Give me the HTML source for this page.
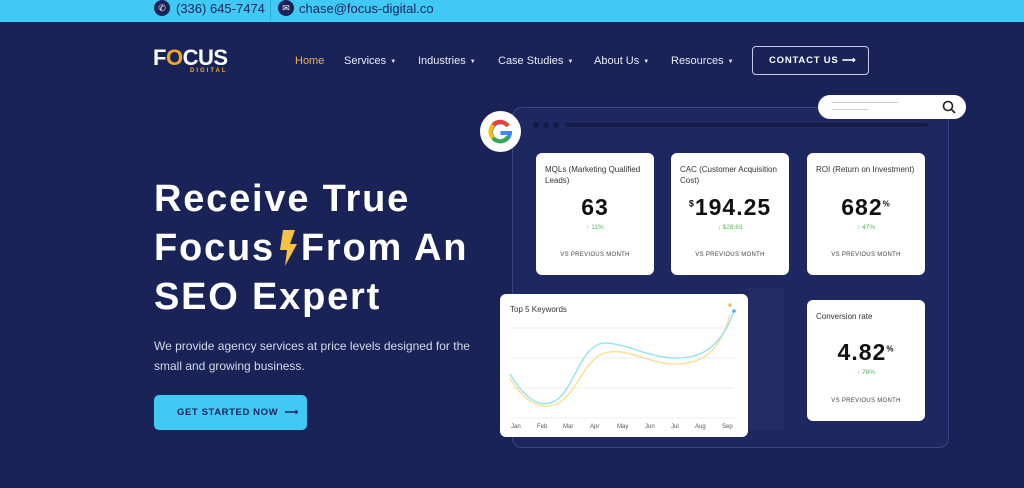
<!DOCTYPE html>
<html><head><style>
*{margin:0;padding:0;box-sizing:border-box}
body{width:1024px;height:488px;overflow:hidden;background:#1a2358;font-family:"Liberation Sans",sans-serif;position:relative;color:#fff}
.top{position:absolute;left:0;top:0;width:1024px;height:22px;background:#41c9f5}
.ic{position:absolute;top:0;width:16px;height:16px;border-radius:50%;background:#1a2358;color:#fff;font-size:9px;text-align:center;line-height:16px}
.tt{position:absolute;top:1px;font-size:13px;color:#1a2358}
.nav{position:absolute;top:55px;font-size:11px;color:#e8eaf3}
.nav span{font-size:6px;margin-left:4px;vertical-align:1px}
.card{position:absolute;background:#fff;border-radius:6px;color:#222}
.lbl{position:absolute;left:9px;top:11px;font-size:8px;line-height:11px;color:#333}
.big{position:absolute;width:100%;text-align:center;font-weight:bold;font-size:23px;color:#111;letter-spacing:1px}
.ch{position:absolute;width:100%;text-align:center;font-size:6.5px;color:#5cb85c}
.vs{position:absolute;width:100%;text-align:center;font-size:6px;color:#444;letter-spacing:.3px}
</style></head><body>
<div class="top"></div>
<div class="ic" style="left:154px">✆</div>
<div class="tt" style="left:176px">(336) 645-7474</div>
<div style="position:absolute;left:270px;top:0;width:1px;height:20px;background:#2fa9d3"></div>
<div class="ic" style="left:278px">✉</div>
<div class="tt" style="left:299px">chase@focus-digital.co</div>

<div style="position:absolute;left:153px;top:45px;font-size:22px;font-weight:bold;letter-spacing:-0.5px">F<span style="color:#f5a623">O</span>CUS</div>
<div style="position:absolute;left:190px;top:68px;font-size:6px;color:#f5a623;letter-spacing:2px;font-weight:bold">DIGITAL</div>

<div class="nav" style="left:295px;color:#e7b34a">Home</div>
<div class="nav" style="left:344px">Services<span>▼</span></div>
<div class="nav" style="left:418px">Industries<span>▼</span></div>
<div class="nav" style="left:498px">Case Studies<span>▼</span></div>
<div class="nav" style="left:594px">About Us<span>▼</span></div>
<div class="nav" style="left:671px">Resources<span>▼</span></div>
<div style="position:absolute;left:752px;top:46px;width:117px;height:29px;border:1px solid #c8cce0;border-radius:4px;font-size:9.5px;font-weight:bold;letter-spacing:.8px;line-height:27px;padding-left:16px">CONTACT US ⟶</div>

<div style="position:absolute;left:154px;top:175px;font-size:38px;font-weight:bold;line-height:49px;letter-spacing:1.8px;white-space:nowrap">Receive True<br>Focus<svg width="22" height="40" viewBox="0 0 22 40" style="vertical-align:-8px;margin:0 2px"><path d="M6 2 L18 2 L13 16 L20 16 L8 38 L10 22 L3 22 Z" fill="#f6c244"/></svg>From An<br>SEO Expert</div>
<div style="position:absolute;left:154px;top:336px;font-size:12px;line-height:20px;color:#d6d9e8">We provide agency services at price levels designed for the<br>small and growing business.</div>
<div style="position:absolute;left:154px;top:395px;width:153px;height:35px;background:#41c9f5;border-radius:5px;color:#1a2358;font-size:9.5px;font-weight:bold;letter-spacing:.6px;line-height:35px;padding-left:23px">GET STARTED NOW &nbsp;⟶</div>

<div style="position:absolute;left:512px;top:107px;width:437px;height:341px;border:1px solid #3a4683;border-radius:10px;background:#1d2760"></div>
<div style="position:absolute;left:533px;top:122px;width:6px;height:6px;border-radius:50%;background:#141b45;box-shadow:10px 0 #141b45,20px 0 #141b45"></div>
<div style="position:absolute;left:566px;top:123px;width:362px;height:4px;border-radius:2px;background:#141b45"></div>
<div style="position:absolute;left:748px;top:288px;width:36px;height:142px;background:#232c64"></div>
<div style="position:absolute;left:818px;top:95px;width:148px;height:24px;border-radius:12px;background:#fff"><div style="position:absolute;left:14px;top:7px;width:66px;height:1px;background:#ccc"></div><div style="position:absolute;left:14px;top:14px;width:36px;height:1px;background:#ccc"></div><svg width="14" height="14" style="position:absolute;left:124px;top:5px"><circle cx="6" cy="6" r="4.5" fill="none" stroke="#222" stroke-width="1.6"/><line x1="9.5" y1="9.5" x2="13" y2="13" stroke="#222" stroke-width="1.6"/></svg></div>
<div style="position:absolute;left:480px;top:111px;width:41px;height:41px;border-radius:50%;background:#fff"><svg width="41" height="41" viewBox="0 0 41 41"><path d="M28 15 A9.5 9.5 0 1 0 30 22 L20.5 22" fill="none" stroke="#4285f4" stroke-width="4"/><path d="M13 14 A9.5 9.5 0 0 1 28 15" fill="none" stroke="#ea4335" stroke-width="4"/><path d="M13 14 A9.5 9.5 0 0 0 13 27" fill="none" stroke="#fbbc05" stroke-width="4"/><path d="M13 27 A9.5 9.5 0 0 0 28 26" fill="none" stroke="#34a853" stroke-width="4"/></svg></div>

<div class="card" style="left:536px;top:153px;width:118px;height:122px"><div class="lbl">MQLs (Marketing Qualified<br>Leads)</div><div class="big" style="top:41px">63</div><div class="ch" style="top:71px">↑ 11%</div><div class="vs" style="top:99px">VS PREVIOUS MONTH</div></div>
<div class="card" style="left:671px;top:153px;width:118px;height:122px"><div class="lbl">CAC (Customer Acquisition<br>Cost)</div><div class="big" style="top:41px"><sup style="font-size:9px">$</sup>194.25</div><div class="ch" style="top:71px">↓ $28.63</div><div class="vs" style="top:99px">VS PREVIOUS MONTH</div></div>
<div class="card" style="left:807px;top:153px;width:118px;height:122px"><div class="lbl">ROI (Return on Investment)</div><div class="big" style="top:41px">682<sup style="font-size:8px">%</sup></div><div class="ch" style="top:71px">↑ 47%</div><div class="vs" style="top:99px">VS PREVIOUS MONTH</div></div>
<div class="card" style="left:807px;top:300px;width:118px;height:121px"><div class="lbl">Conversion rate</div><div class="big" style="top:39px">4.82<sup style="font-size:8px">%</sup></div><div class="ch" style="top:69px">↑ 78%</div><div class="vs" style="top:98px">VS PREVIOUS MONTH</div></div>

<div class="card" style="left:500px;top:294px;width:248px;height:143px">
<div style="position:absolute;left:10px;top:11px;font-size:8px;color:#333">Top 5 Keywords</div>
<svg width="248" height="143" style="position:absolute;left:0;top:0">
<g stroke="#eee" stroke-width="1"><line x1="10" y1="34" x2="234" y2="34"/><line x1="10" y1="64" x2="234" y2="64"/><line x1="10" y1="94" x2="234" y2="94"/><line x1="10" y1="124" x2="234" y2="124"/></g>
<path d="M10,84 C25,110 45,118 60,108 C80,95 85,60 110,58 C130,55 150,70 175,70 C200,70 220,60 230,20" fill="none" stroke="#fddc8a" stroke-width="1.3"/>
<path d="M10,80 C25,105 40,115 55,107 C75,95 80,50 105,49 C130,50 150,65 180,64 C205,63 222,50 234,17" fill="none" stroke="#8fe0f5" stroke-width="1.3"/>
<circle cx="230" cy="11" r="1.8" fill="#f5c04a"/><circle cx="234" cy="17" r="1.8" fill="#38b8e8"/>
<g font-size="6" fill="#555" font-family="Liberation Sans"><text x="11" y="134">Jan</text><text x="37" y="134">Feb</text><text x="63" y="134">Mar</text><text x="90" y="134">Apr</text><text x="117" y="134">May</text><text x="145" y="134">Jun</text><text x="171" y="134">Jul</text><text x="195" y="134">Aug</text><text x="222" y="134">Sep</text></g>
</svg></div>
</body></html>
